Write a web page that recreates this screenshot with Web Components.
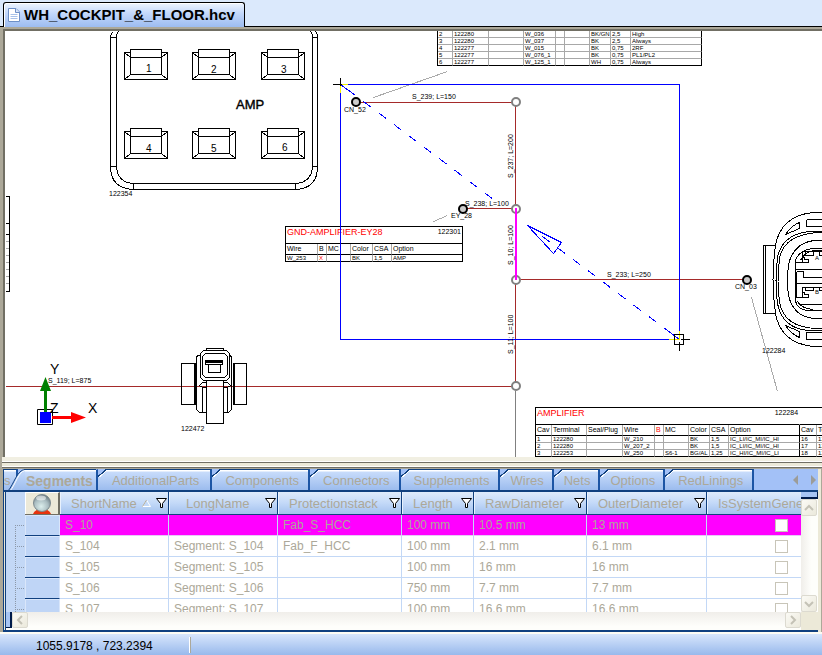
<!DOCTYPE html>
<html lang="en">
<head>
<meta charset="utf-8">
<title>WH_COCKPIT_&amp;_FLOOR.hcv</title>
<style>
html, body { height: 100%; margin: 0; }
body { font-family: "Liberation Sans", Arial, sans-serif; font-size: 13px; color: #000; background: #dbe9fc; overflow: hidden; }
</style>
</head>
<body>
<harness-app></harness-app>
<script>
const define = (name, html, setup) => customElements.define(name, class extends HTMLElement {
  constructor() {
    super();
    const t = document.createElement('template');
    t.innerHTML = html;
    this.attachShadow({ mode: 'open' }).append(t.content.cloneNode(true));
  }
  connectedCallback() { if (setup) setup(this, this.shadowRoot); }
});

/* ---------- document tab bar ---------- */
define('document-tab', `
<style>
:host { display: flex; align-items: flex-end; height: 27px; box-sizing: border-box; padding-left: 3px; border-bottom: 1px solid #000; background: #dbe9fc; }
button { display: flex; align-items: center; gap: 4px; height: 25px; margin: 0 0 -1px; padding: 0 9px 0 4px; border: 1px solid #000; border-bottom: 0; border-radius: 3px 3px 0 0;
  background: linear-gradient(#eef5ff, #c2d7fb 45%, #9dbcf0); font: bold 15px/24px "Liberation Sans", Arial, sans-serif; color: #000; white-space: nowrap; box-shadow: inset 1px 1px #fff; }
svg { width: 12px; height: 14px; flex: none; }
</style>
<button type="button">
<svg viewBox="0 0 12 14"><path d="M.5 .5h7.500l3.500 3.500v9.500h-11z" fill="#fff" stroke="#6d8fc7"/><path d="M7.500 .5v4h4" fill="#d6e4fa" stroke="#6d8fc7"/><path d="M2.500 6.500h7M2.500 8.500h7M2.500 10.500h7" stroke="#a9c2ea"/></svg>
<span><slot></slot></span></button>`);

/* ---------- tables lying on the drawing ---------- */
const cadTables = {
  top: {
    cols: [15, 36, 35, 32, 9, 25, 21, 20, 71],
    rows: [
      ['2', '122280', '', 'W_036', '', '', 'BK/GN', '2,5', 'High'],
      ['3', '122280', '', 'W_037', '', '', 'BK', '2,5', 'Always'],
      ['4', '122277', '', 'W_015', '', '', 'BK', '0,75', '2RF'],
      ['5', '122277', '', 'W_076_1', '', '', 'BK', '0,75', 'PL1/PL2'],
      ['6', '122277', '', 'W_125_1', '', '', 'WH', '0,75', 'Always']]
  },
  gnd: {
    title: 'GND-AMPLIFIER-EY28', number: '122301', cols: [32, 9, 24, 22, 19, 71],
    head: ['Wire', 'B', 'MC', 'Color', 'CSA', 'Option'],
    rows: [['W_253', 'X', '', 'BK', '1,5', 'AMP']], red: [1]
  },
  amp: {
    title: 'AMPLIFIER', number: '122284', cols: [16, 35, 36, 32, 9, 25, 21, 19, 71, 17, 35], split: 8, redHead: 4,
    head: ['Cav', 'Terminal', 'Seal/Plug', 'Wire', 'B', 'MC', 'Color', 'CSA', 'Option', 'Cav', 'Te'],
    rows: [
      ['1', '122280', '', 'W_210', '', '', 'BK', '1,5', 'IC_LI/IC_MI/IC_HI', '16', '12'],
      ['2', '122280', '', 'W_207_2', '', '', 'BK', '1,5', 'IC_LI/IC_MI/IC_HI', '17', '12'],
      ['3', '122253', '', 'W_250', '', 'S6-1', 'BG/AL', '1,25', 'IC_HI/IC_MI/IC_LI', '18', '12']]
  }
};
define('cad-table', `
<style>
:host { display: block; border-left: 1px solid #000; }
:host([titled]) { border-top: 1px solid #000; }
table { border-spacing: 0; table-layout: fixed; }
td, th { box-sizing: border-box; height: 7px; padding: 0 0 0 1px; border: 0 solid #a8a8a8; border-width: 0 1px 1px 0; font-size: 6px; line-height: 6px; font-weight: normal; text-align: left; white-space: nowrap; overflow: hidden; vertical-align: middle; }
tr > :last-child, .split { border-right-color: #000; }
tr:last-child > td { border-bottom-color: #000; }
th { height: 11px; font-size: 7px; line-height: 10px; border-bottom-color: #000; }
th.title { height: 17px; border-right-color: transparent; }
th.title.last { border-right-color: #000; }
.line { display: flex; justify-content: space-between; align-items: flex-start; height: 16px; line-height: 10px; padding-right: 1px; }
.line b { font-weight: normal; font-size: 9px; color: #f00; }
.red { color: #f00; }
</style><table><colgroup></colgroup><thead></thead><tbody></tbody></table>`, (host, root) => {
  const d = cadTables[host.getAttribute('name')];
  root.querySelector('table').style.width = d.cols.reduce((a, b) => a + b) + 'px';
  root.querySelector('colgroup').innerHTML = d.cols.map(w => `<col style="width:${w}px">`).join('');
  if (d.title) {
    host.toggleAttribute('titled', true);
    const span = d.split === undefined ? d.cols.length : d.split + 1;
    const rest = d.cols.length - span;
    root.querySelector('thead').innerHTML =
      `<tr><th class="title ${rest ? '' : 'last'}" colspan="${span}"><div class="line"><b>${d.title}</b><span>${d.number}</span></div></th>${rest ? `<th class="title last" colspan="${rest}"></th>` : ''}</tr>` +
      '<tr>' + d.head.map((h, i) => `<th scope="col" class="${i === d.redHead ? 'red' : ''} ${i === d.split ? 'split' : ''}">${h}</th>`).join('') + '</tr>';
  }
  root.querySelector('tbody').innerHTML = d.rows.map(r => '<tr>' + r.map((c, i) => `<td class="${(d.red || []).includes(i) ? 'red' : ''} ${i === d.split ? 'split' : ''}">${c}</td>`).join('') + '</tr>').join('');
});

/* ---------- drawing area ---------- */
define('drawing-canvas', `
<style>
:host { display: block; position: relative; overflow: hidden; background: #fff; }
cad-table { position: absolute; }
.t1 { left: 432px; top: 0; } .t2 { left: 280px; top: 195px; } .t3 { left: 530px; top: 376px; }
svg { position: absolute; left: 0; top: 0; width: 100%; height: 100%; }
.shape { fill: none; stroke: #000; shape-rendering: crispEdges; }
.wire { stroke: #a52a2a; } .sel { stroke: #00f; } .lead { stroke: #aaa; } .snap { stroke: #ee0; }
text { font-size: 7px; } .pin { font-size: 10px; } .axis { font-size: 14px; } .name { font-size: 13px; stroke: #000; stroke-width: .4; } .cav { font-size: 6px; }
.joint { fill: #fff; stroke: #808080; stroke-width: 2; } .node { fill: #ccc; stroke: #000; stroke-width: 2; }
</style>
<cad-table class="t1" name="top"></cad-table>
<cad-table class="t2" name="gnd"></cad-table>
<cad-table class="t3" name="amp"></cad-table>
<svg><defs>
<path id="cav" d="M0 3h6M37 3h6v27H0V3M6 0h31v25H6zM6 8h31M0 3l6 5M43 3l-6 5M6 25l-6 5M37 25l6 5"/>
</defs>
<g transform="translate(-5 -31)">
<g class="shape" transform="translate(.5 .5)">
  <path d="M113 31q-3 2-3 6V166q0 22 23 23H295q22-1 22-23V37q0-4-2-6M118 31q-2 2-2 6V166q1 16 17 17H295q16-1 17-17V37q0-4-2-6M110 37h6M312 37h5M110 166h6M312 166h5M133 183v6M295 183v6"/>
  <use href="#cav" x="124" y="49"/><use href="#cav" x="192" y="49"/><use href="#cav" x="261" y="49"/>
  <use href="#cav" x="124" y="128"/><use href="#cav" x="192" y="128"/><use href="#cav" x="261" y="128"/>
  <path class="lead" d="M5 241h4M5 248h4M5 255h4M5 262h4M5 269h4M5 276h4M5 283h4"/>
  <path d="M5 196h4v95h-4M5 223h4M5 234h4"/>
  <g class="wire"><path d="M5 386H515M356 102H515M462 208H515M515 279H746M515 102V386"/></g>
  <path stroke="#808080" d="M515 390v200"/>
  <g class="lead"><path d="M373 97l74-26M433 221l14-6M751 297l26 94"/></g>
  <path d="M181 363h14v41h-14zM194 363v41M233 363h13v41h-13zM234 363v41M200 355h-3l-1 2v52l3 3h7M229 355h1l1 2v52l-3 3h-5M206 350v-2h17v2M203 350h23l3 3v24l-3 3h-23l-3-3v-24zM205 353h19l3 3v18l-3 3h-19l-3-3v-18zM205 360h17v4h-17zM205 361h17M205 362h17M208 364h12v8h-12zM206 380h17v43h-17zM206 382h-4l-3 3 3 2h4M223 382h4l3 3-3 2h-4M202 387v25M227 387v25"/>
  <path d="M775 245h-12v68h12M765 245v68M830 212h-18q-32 4-37 33q-5 34 0 68q5 29 37 33h18M830 231h-20q-28 2-33 26q-3 24 0 46q5 26 33 27h20M830 232h-14q-33 3-37 26q-3 24 0 43q4 26 37 27h14M830 240h-17q-20 3-25 24q-2 16 0 31q5 21 25 23h17M830 248h-18q-14 2-17 12v41q3 10 17 9h18M830 250h-16q-10 1-14 10M797 301q4 7 16 8M806 219h20M806 219v7h20M785 234q6-9 14-12v6zM806 339h20M806 339v-7h20M785 325q6 9 14 12v-6z"/>
  <path d="M826 251h-24v6h2v2h4v3h-13M805 251v4h8v-4M819 251v4h7M795 269h31M796 271h7v6h23M796 271v20M796 283h30M826 287h-24v5h2v2h4v3h-12M805 287v3h8v-3M819 287v3h7M796 297v-14M798 304h28M802 251v11M802 287v10"/>
  <g class="sel"><path d="M340 84H679V330M340 84V339H668M340 84l15 11M671 333l8 6"/>
  <path d="M527 225l34 17-8 11z"/>
  <path stroke-dasharray="9 10" d="M363 101l130 98M542 236l137 103"/></g>
  <g class="snap"><path d="M340 84h7M340 84v8M668 339h11M679 330v9"/></g>
  <path d="M332 84h9M340 77v8M674 334h9v10h-9zM680 339h9M679 341v9"/>
</g>
<path d="M516 209v71" stroke="#f0f" stroke-width="2" shape-rendering="crispEdges"/>
<g class="joint"><circle cx="516" cy="102" r="4"/><circle cx="516" cy="209" r="4"/><circle cx="516" cy="280" r="4"/><circle cx="516" cy="386" r="4"/></g>
<path d="M516 208v72" stroke="#f0f" stroke-width="2" shape-rendering="crispEdges"/>
<g class="node"><circle cx="356" cy="102" r="4"/><circle cx="463" cy="209" r="4"/><circle cx="747" cy="280" r="4"/></g>
<path d="M37.500 409.500h15v15h-15z" fill="#fff" stroke="#000"/>
<path d="M40 412h11v11h-11z" fill="#00f"/><path d="M44 412v-21h-4l5.500-14 5.500 14h-4v21z" fill="#008000"/><path d="M52 416h19v-4l15 5.500-15 5.500v-4H52z" fill="#f00"/>
<text class="axis" x="50" y="374">Y</text><text class="axis" x="50" y="413">Z</text><text class="axis" x="88" y="413">X</text>
<text class="pin" x="146" y="72">1</text><text class="pin" x="211" y="73">2</text><text class="pin" x="281" y="73">3</text><text class="pin" x="146" y="152">4</text><text class="pin" x="211" y="152">5</text><text class="pin" x="282" y="151">6</text>
<text class="name" x="236" y="109">AMP</text>
<text x="109" y="196">122354</text><text x="181" y="431">122472</text><text x="762" y="353">122284</text>
<text x="48" y="383">S_119; L=875</text><text x="412" y="99">S_239; L=150</text><text x="465" y="206">S_238; L=100</text><text x="607" y="277">S_233; L=250</text>
<text x="344" y="112">CN_52</text><text x="451" y="218">EY_28</text><text x="735" y="289">CN_03</text>
<text transform="translate(513 178) rotate(-90)">S_237; L=200</text><text transform="translate(513 265) rotate(-90)">S_10; L=100</text><text transform="translate(513 354) rotate(-90)">S_11; L=100</text>
<text class="cav" x="815" y="260">A</text><text class="cav" x="815" y="294">B</text>
</g></svg>`);

/* ---------- category tabs ---------- */
define('category-tabs', `
<style>
:host { display: flex; justify-content: space-between; height: 23px; box-sizing: border-box; border-bottom: 2px solid #10407f; background: #a3c1f7; overflow: hidden; }
[role=tablist] { display: flex; flex: none; }
button { font: 13px/20px "Liberation Sans", Arial, sans-serif; color: #aca899; margin: 0; padding: 0; border: 0; background: none; white-space: nowrap; }
.tab { position: relative; flex: none; padding: 1px 9px 0 13px; border-top: 1px solid #10407f; border-right: 2px solid #1c55a5; background: linear-gradient(#fff 0 1px, #c8dcfb 2px, #9cbcee); }
.tab.long { padding: 1px 11px 0 14px; }
.tab.short { padding: 1px 8px 0 10px; }
.tab::before { content: ""; position: absolute; left: 0; top: -1px; width: 9px; height: 8px; background: linear-gradient(to bottom right, #a3c1f7 42%, #10407f 43% 53%, #fff 54% 62%, transparent 63%); }
.tab.cut { width: 14px; padding: 1px 0 0; text-align: left; }
.tab.cut::before { display: none; }
.tab[aria-selected=true] { font-weight: bold; font-size: 14px; padding: 1px 3px 0 18px; margin-left: -10px; background: linear-gradient(#fff 0 1px, #c8dcfb 2px, #9cbcee) 16px 0 no-repeat; border-top-color: transparent; }
.tab[aria-selected=true] svg { position: absolute; left: 0; top: -1px; }
.tab[aria-selected=true]::before { display: none; }
.tab[aria-selected=true]::after { content: ""; position: absolute; left: 16px; right: 0; top: -1px; border-top: 1px solid #10407f; }
.nav { display: flex; align-items: center; gap: 11px; padding-right: 1px; }
.nav svg { display: block; width: 7px; height: 10px; }
</style>
<div role="tablist">
<button class="tab cut" role="tab" type="button">s</button>
<button class="tab" role="tab" type="button" aria-selected="true"><svg width="17" height="22"><defs><linearGradient id="g" x2="0" y2="1"><stop stop-color="#c8dcfb"/><stop offset="1" stop-color="#9cbcee"/></linearGradient></defs><path d="M0 22C6 15 9 2 17 0V22z" fill="url(#g)"/><path d="M0 22C6 15 9 1 17 .5" fill="none" stroke="#10407f"/><path d="M2 22C8 15 10 3 17 1.500" fill="none" stroke="#fff"/></svg>Segments</button>
<button class="tab long" role="tab" type="button">AdditionalParts</button><button class="tab" role="tab" type="button">Components</button><button class="tab" role="tab" type="button">Connectors</button><button class="tab" role="tab" type="button">Supplements</button><button class="tab short" role="tab" type="button">Wires</button><button class="tab short" role="tab" type="button">Nets</button><button class="tab short" role="tab" type="button">Options</button><button class="tab" role="tab" type="button">RedLinings</button>
</div>
<div class="nav"><button type="button" aria-label="Previous tabs"><svg viewBox="0 0 7 10"><path d="M6 0v10L1 5z" fill="#9c9c98"/></svg></button><button type="button" aria-label="Next tabs"><svg viewBox="0 0 7 10"><path d="M1 0v10l5-5z" fill="#9c9c98"/></svg></button></div>`);

/* ---------- scroll bars ---------- */
define('scroll-bar', `
<style>
:host { display: flex; justify-content: space-between; background: linear-gradient(#f0eeea, #fefefb 80%); }
:host([vertical]) { flex-direction: column; background: linear-gradient(90deg, #f0eeea, #fefefb 60%); }
.start { display: flex; } :host([vertical]) .start { flex-direction: column; }
.split { width: 6px; height: 16px; box-sizing: border-box; background: #a6c4f4; border: solid #001b4a; border-width: 0 2px 1px 0; }
:host([vertical]) .split { width: auto; height: 7px; border-width: 0 1px 2px 0; }
button { width: 16px; height: 16px; box-sizing: border-box; margin: 0; padding: 0; border: 1px solid #dcdad0; border-radius: 2px; background: linear-gradient(135deg, #fbfaf5, #ebe9dc); }
:host([vertical]) button { height: 17px; }
svg { display: block; width: 14px; height: 14px; fill: none; stroke: #c4c2b6; stroke-width: 2; }
</style>
<div class="start"><div class="split"></div><button type="button" aria-label="Scroll back"><svg viewBox="0 0 14 14"><path class="a"/></svg></button></div>
<button type="button" aria-label="Scroll forward"><svg viewBox="0 0 14 14"><path class="b"/></svg></button>`, (host, root) => {
  const v = host.hasAttribute('vertical');
  root.querySelector('.a').setAttribute('d', v ? 'M3 9l4-4 4 4' : 'M9 3L5 7l4 4');
  root.querySelector('.b').setAttribute('d', v ? 'M3 5l4 4 4-4' : 'M5 3l4 4-4 4');
});

/* ---------- data grid ---------- */
define('segment-grid', `
<style>
:host { display: grid; grid-template: minmax(0, 1fr) 18px / minmax(0, 1fr) 17px; box-sizing: border-box; border-left: 1px solid #10407f; background: #ece9d8; min-height: 0; }
.view { overflow: hidden; background: #fff; }
table { border-spacing: 0; table-layout: fixed; width: 851px; }
col.tree { width: 19px; } col.pick { width: 35px; } col.n { width: 109px; } col.p { width: 124px; } col.l { width: 72px; } col.r { width: 113px; } col.o { width: 120px; } col.s { width: 150px; }
th, td { box-sizing: border-box; padding: 0; overflow: hidden; white-space: nowrap; font-weight: normal; text-align: left; color: #aca899; }
th { height: 23px; border-right: 1px solid #10407f; border-bottom: 1px solid #10407f; background: linear-gradient(#dfebfb, #c3d9f8 50%, #a3c1ee); box-shadow: inset 1px 0 #e8f1fd; font-size: 13px; }
td { height: 21px; padding-left: 5px; border-right: 1px solid #c3d8f6; border-bottom: 1px solid #c3d8f6; font-size: 12px; line-height: 20px; }
.h { display: flex; align-items: center; height: 22px; padding: 0 0 0 11px; gap: 4px; }
.h.wide { padding-left: 17px; }
.h span { flex: 1; }
.h button { width: 13px; height: 12px; padding: 0; border: 0; background: none; flex: none; }
svg { display: block; }
.tree, td.tree { background: #c3d8f6; border: 0; box-shadow: none; padding: 0; }
td.tree div { height: 21px; position: relative; }
td.tree div::before { content: ""; position: absolute; left: 9px; top: 10px; width: 9px; border-top: 1px dotted #8c98a8; }
td.tree div::after { content: ""; position: absolute; left: 9px; top: 0; height: 21px; border-left: 1px dotted #8c98a8; }
tr:first-child td.tree div::after { top: 10px; height: 11px; }
td.pick { background: #bfd5f6; border-right: 1px solid #d9e6fa; border-bottom: 1px solid #10407f; box-shadow: inset 1px 1px #d9e6fa; }
th.pick { background: #c3d8f6; border-right: 0; border-bottom-color: #716f64; }
th.pick button { display: flex; justify-content: center; align-items: flex-end; width: 35px; height: 22px; padding: 0; border: solid; border-width: 1px 2px 0 1px; border-color: #fff #716f64 #716f64 #fff; background: #ece9d8; }
tr.on td.v { background: #f0f; border-bottom-color: #e6c8f8; }
td.check { padding: 0; text-align: center; }
input { appearance: none; display: inline-block; width: 13px; height: 13px; margin: 0; border: 1px solid #c8c5b8; background: #fff; vertical-align: middle; }
.corner { background: #ece9d8; }
</style>
<div class="view"><table>
<colgroup><col class="tree"><col class="pick"><col class="n"><col class="n"><col class="p"><col class="l"><col class="r"><col class="o"><col class="s"></colgroup>
<thead><tr></tr></thead><tbody></tbody></table></div>
<scroll-bar vertical></scroll-bar><scroll-bar></scroll-bar><div class="corner"></div>`, (host, root) => {
  const funnel = n => `<button type="button" aria-label="Filter ${n}"><svg width="13" height="12" viewBox="0 0 13 12"><path d="M1.500 1.500h10l-4 5v4h-2v-4z" fill="#fff" stroke="#000"/></svg></button>`;
  const sort = '<svg width="9" height="9" viewBox="0 0 9 9"><path d="M4.500 1L.5 7.500h8z" fill="#c3d9f8" stroke="#fff"/><path d="M4.500 1L.5 7.500" fill="none" stroke="#aca899"/></svg>';
  const heads = [['ShortName', ''], ['LongName', 'wide'], ['Protectionstack', ''], ['Length', ''], ['RawDiameter', ''], ['OuterDiameter', ''], ['IsSystemGenerated', '']];
  root.querySelector('thead tr').innerHTML = '<th class="tree"></th><th class="pick"><button type="button" aria-label="Choose fields"><svg width="20" height="20" viewBox="0 0 20 20"><defs><radialGradient id="b" cx=".45" cy=".7" r=".7"><stop stop-color="#dcefed"/><stop offset=".6" stop-color="#a9bcc0"/><stop offset="1" stop-color="#65757c"/></radialGradient></defs><path d="M1 20q2-5 9-5t9 5z" fill="#e8330c"/><circle cx="10" cy="9" r="8.500" fill="url(#b)" stroke="#7d8b90"/><ellipse cx="9" cy="4" rx="5" ry="2.500" fill="#fff" opacity=".55"/></svg></button></th>' +
    heads.map(([h, c], i) => `<th scope="col"><div class="h ${c}"><span>${h}</span>${i === 0 ? sort : ''}${i < 6 ? funnel(h) : ''}</div></th>`).join('');
  const rows = [
    ['S_10', '', 'Fab_S_HCC', '100 mm', '10.5 mm', '13 mm'],
    ['S_104', 'Segment: S_104', 'Fab_F_HCC', '100 mm', '2.1 mm', '6.1 mm'],
    ['S_105', 'Segment: S_105', '', '100 mm', '16 mm', '16 mm'],
    ['S_106', 'Segment: S_106', '', '750 mm', '7.7 mm', '7.7 mm'],
    ['S_107', 'Segment: S_107', '', '100 mm', '16.6 mm', '16.6 mm']];
  root.querySelector('tbody').innerHTML = rows.map((r, i) => `<tr class="${i ? '' : 'on'}"><td class="tree"><div></div></td><td class="pick"></td>${r.map(c => `<td class="v">${c}</td>`).join('')}<td class="v check"><input type="checkbox" aria-label="${r[0]} is system generated"></td></tr>`).join('');
});

/* ---------- status bar ---------- */
define('status-bar', `
<style>
:host { display: flex; align-items: center; height: 21px; border-top: 2px solid #fdfcf4; box-sizing: content-box; background: linear-gradient(#d8e6fc, #98b9ec); font-size: 12px; }
span { flex: none; width: 153px; padding-left: 36px; border-right: 1px solid #fff; box-shadow: 1px 0 #aca899; line-height: 14px; padding-top: 2px; }
</style><span><slot></slot></span>`);

/* ---------- window ---------- */
define('harness-app', `
<style>
:host { display: flex; flex-direction: column; height: 100vh; }
.upper { flex: 1; min-height: 0; display: grid; border-left: 3px solid #aca899; border-top: 2px solid #aca899; }
drawing-canvas { border-left: 2px solid #716f64; border-top: 2px solid #716f64; }
.divider { flex: none; height: 12px; border-left: 2px solid #aca899; box-sizing: border-box; background: linear-gradient(#f1efe2 0 4px, #fff 4px 5px, #716f64 5px 6px, #ece9d8 6px 9px, #fff 9px 10px, #716f64 10px 11px, #aca899 11px); }
.lower { flex: none; height: 163px; box-sizing: border-box; display: flex; border-left: 3px solid #aca899; background: #ece9d8; padding-right: 3px; border-right: 1px solid #aca899; }
.panel { flex: 1; min-width: 0; display: flex; flex-direction: column; border-left: 1px solid #10407f; border-bottom: 2px solid #10407f; }
segment-grid { flex: 1; margin-left: 1px; }
</style>
<document-tab>WH_COCKPIT_&amp;_FLOOR.hcv</document-tab>
<main class="upper"><drawing-canvas></drawing-canvas></main>
<div class="divider"></div>
<section class="lower"><div class="panel"><category-tabs></category-tabs><segment-grid></segment-grid></div></section>
<status-bar>1055.9178 , 723.2394</status-bar>`);
</script>
</body>
</html>
